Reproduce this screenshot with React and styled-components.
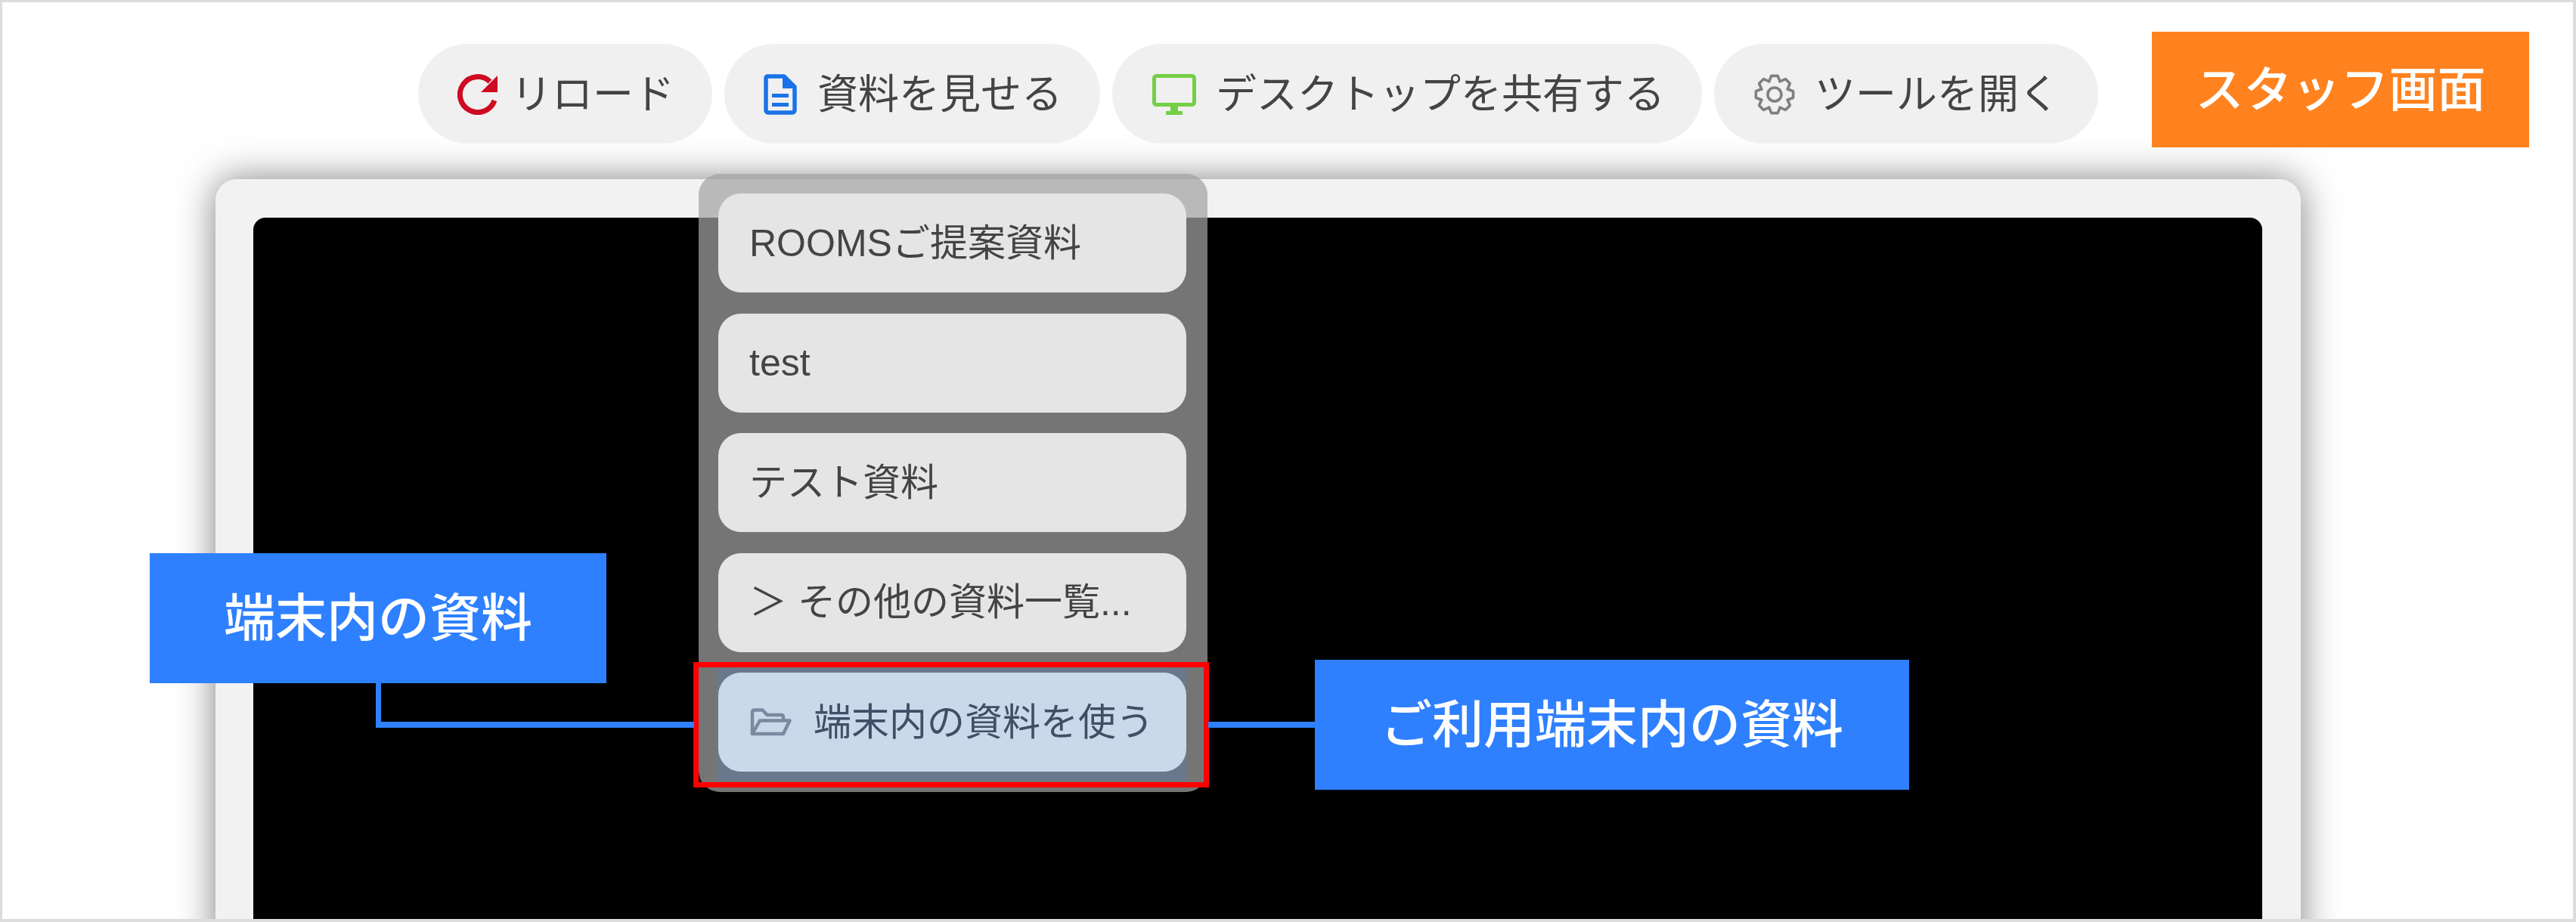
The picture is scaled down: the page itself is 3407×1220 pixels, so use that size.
import React from "react";
import styled, { createGlobalStyle } from "styled-components";

const Global = createGlobalStyle`
  html, body { margin: 0; padding: 0; background: #fff; }
  body { font-family: "Liberation Sans", "Noto Sans CJK JP", sans-serif; }
`;

const Page = styled.div`
  position: relative;
  box-sizing: border-box;
  width: 3407px;
  height: 1220px;
  border: 3px solid #dcdcdc;
  border-right-width: 4px;
  border-bottom-width: 4px;
  background: #fff;
  overflow: hidden;
`;

const Toolbar = styled.header`
  position: relative;
  z-index: 1;
  display: flex;
  justify-content: flex-end;
  align-items: flex-start;
  gap: 16px;
  padding: 39px 58px 0 0;
`;

const Pill = styled.button`
  display: flex;
  align-items: center;
  flex: none;
  box-sizing: border-box;
  width: ${(p) => p.$w}px;
  height: 132px;
  margin: 16px 0 0;
  padding: 2px 0 0 ${(p) => p.$pl}px;
  gap: ${(p) => p.$gap}px;
  border: 0;
  border-radius: 66px;
  background: #f0f0f0;
  color: #444;
  font: 400 54px/1 "Liberation Sans", "Noto Sans CJK JP", sans-serif;
  white-space: nowrap;
`;

const StaffBadge = styled.div`
  display: flex;
  align-items: center;
  justify-content: center;
  flex: none;
  width: 499px;
  height: 153px;
  margin-left: 55px;
  background: #ff821e;
  color: #fff;
  font-size: 64px;
  font-weight: 500;
  line-height: 1;
`;

const Card = styled.section`
  display: flex;
  box-sizing: border-box;
  width: 2758px;
  height: 1100px;
  margin: 42px 0 0 282px;
  padding: 51px 51px 0 50px;
  border-radius: 28px;
  background: #f2f2f2;
  box-shadow: 0 0 50px rgba(0, 0, 0, 0.5);
`;

const Screen = styled.div`
  flex: 1;
  border-radius: 16px 16px 0 0;
  background: #000;
`;

const Dropdown = styled.nav`
  position: absolute;
  z-index: 2;
  left: 921px;
  top: 227px;
  box-sizing: border-box;
  display: flex;
  flex-direction: column;
  gap: 27.5px;
  width: 673px;
  height: 818px;
  padding: 26px 28px 26px 26px;
  border-radius: 28px;
  background: rgba(162, 162, 162, 0.72);
`;

const Item = styled.div`
  display: flex;
  align-items: center;
  flex: none;
  gap: 29px;
  box-sizing: border-box;
  height: 131px;
  padding-left: ${(p) => p.$pl || 41}px;
  border-radius: 30px;
  background: ${(p) => (p.$active ? "#cbd8ea" : "#e5e5e5")};
  color: ${(p) => (p.$active ? "#3f4f66" : "#444")};
  font-size: 50px;
  line-height: 1;
  white-space: nowrap;
`;

const ActiveStrip = styled.div`
  margin: -6px 0 -12px -2px;
  padding: 6px 0 12px 2px;
  background: #6a788d;
`;

const RedFrame = styled.div`
  position: absolute;
  z-index: 3;
  left: 914px;
  top: 873px;
  box-sizing: border-box;
  width: 682px;
  height: 166px;
  border: 7px solid #ff0000;
`;

const Leader = styled.div`
  position: absolute;
  z-index: 3;
  left: ${(p) => p.$x}px;
  top: ${(p) => p.$y}px;
  width: ${(p) => p.$w}px;
  height: ${(p) => p.$h}px;
  background: #2e80ff;
`;

const Callout = styled.div`
  position: absolute;
  z-index: 4;
  left: ${(p) => p.$x}px;
  top: ${(p) => p.$y}px;
  display: flex;
  align-items: center;
  justify-content: center;
  width: ${(p) => p.$w}px;
  height: 172px;
  background: #2e80ff;
  color: #fff;
  font-size: 68px;
  font-weight: 500;
  line-height: 1;
`;

const Svg = styled.svg`
  flex: none;
  display: block;
`;

const ReloadIcon = () => (
  <Svg width="54" height="54" viewBox="0 0 54 54">
    <path d="M43 10A23.5 23.5 0 1 0 49 35" fill="none" stroke="#cf0a23" strokeWidth="7" />
    <path d="M53 2V24H31Z" fill="#cf0a23" />
  </Svg>
);

const DocIcon = () => (
  <Svg width="44" height="54" viewBox="0 0 44 54">
    <path
      d="M5 3H27L41 17V48a3 3 0 0 1-3 3H6a3 3 0 0 1-3-3V5a2 2 0 0 1 2-2Z"
      fill="none"
      stroke="#1a73e8"
      strokeWidth="5.5"
      strokeLinejoin="round"
    />
    <path d="M25 1L43 19H25Z" fill="#1a73e8" />
    <path d="M11 26H33V31H11ZM11 38H33V43H11Z" fill="#1a73e8" />
  </Svg>
);

const MonitorIcon = () => (
  <Svg width="58" height="54" viewBox="0 0 58 54">
    <rect x="2.5" y="2.5" width="53" height="38" rx="3" fill="none" stroke="#74cf46" strokeWidth="5" />
    <path d="M24 42H34V49H40V54H18V49H24Z" fill="#74cf46" />
  </Svg>
);

const gearPoints = () => {
  const pts = [];
  const step = Math.PI / 4;
  for (let i = 0; i < 8; i++) {
    const a = i * step - Math.PI / 2;
    [
      [-0.4, 18.5],
      [-0.17, 25],
      [0.17, 25],
      [0.4, 18.5],
    ].forEach(([d, r]) => {
      const t = a + d;
      pts.push(`${(27 + r * Math.cos(t)).toFixed(2)},${(27 + r * Math.sin(t)).toFixed(2)}`);
    });
  }
  return pts.join(" ");
};

const GearIcon = () => (
  <Svg width="54" height="54" viewBox="0 0 54 54">
    <polygon points={gearPoints()} fill="none" stroke="#808080" strokeWidth="3.6" strokeLinejoin="round" />
    <circle cx="27" cy="27" r="9" fill="none" stroke="#808080" strokeWidth="3.6" />
  </Svg>
);

const FolderIcon = () => (
  <Svg width="56" height="37" viewBox="0 0 56 37">
    <path
      d="M4 34V5.500Q4 2.500 7 2.500H17.500L23.500 9H42Q45 9 45 12V16M4 34H45L53.500 16.500H14L4 34"
      fill="none"
      stroke="#7a899f"
      strokeWidth="4.500"
      strokeLinejoin="round"
      strokeLinecap="round"
    />
  </Svg>
);

const menu = ["ROOMSご提案資料", "test", "テスト資料", "＞ その他の資料一覧..."];

export default function App() {
  return (
    <>
      <Global />
      <Page>
        <Toolbar>
          <Pill $w={389} $pl={52} $gap={17}>
            <ReloadIcon />
            リロード
          </Pill>
          <Pill $w={497} $pl={52} $gap={27}>
            <DocIcon />
            資料を見せる
          </Pill>
          <Pill $w={780} $pl={53} $gap={26}>
            <MonitorIcon />
            デスクトップを共有する
          </Pill>
          <Pill $w={508} $pl={53} $gap={26}>
            <GearIcon />
            ツールを開く
          </Pill>
          <StaffBadge>スタッフ画面</StaffBadge>
        </Toolbar>
        <Card>
          <Screen />
        </Card>
        <Dropdown>
          {menu.map((label) => (
            <Item key={label}>{label}</Item>
          ))}
          <ActiveStrip>
            <Item $active $pl={41}>
              <FolderIcon />
              端末内の資料を使う
            </Item>
          </ActiveStrip>
        </Dropdown>
        <RedFrame />
        <Leader $x={494} $y={890} $w={7} $h={70} />
        <Leader $x={494} $y={952} $w={421} $h={8} />
        <Leader $x={1595} $y={952} $w={142} $h={8} />
        <Callout $x={195} $y={729} $w={604}>端末内の資料</Callout>
        <Callout $x={1736} $y={870} $w={786}>ご利用端末内の資料</Callout>
      </Page>
    </>
  );
}
